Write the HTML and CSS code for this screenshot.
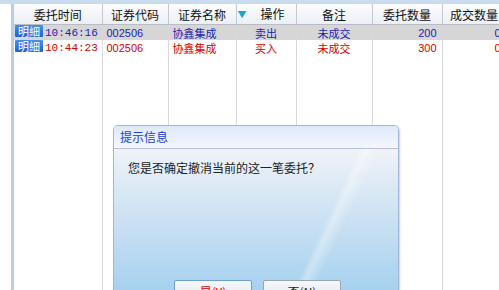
FILE: index.html
```html
<!DOCTYPE html>
<html lang="zh-CN">
<head>
    <meta charset="UTF-8">
    <title>委托撤单</title>
    <link rel="stylesheet" href="styles.css">
</head>
<body>
<div class="frame">
    <div class="side"></div>
    <div class="grid-wrap">
        <table class="grid">
            <colgroup>
                <col class="c1"><col class="c2"><col class="c3"><col class="c4">
                <col class="c5"><col class="c6"><col class="c7">
            </colgroup>
            <thead>
            <tr>
                <th>委托时间</th>
                <th>证券代码</th>
                <th>证券名称</th>
                <th class="sorted"><span class="tri">&#9660;</span>操作</th>
                <th>备注</th>
                <th>委托数量</th>
                <th>成交数量</th>
            </tr>
            </thead>
            <tbody>
            <tr class="sell sel">
                <td class="time"><span class="badge">明細</span>10:46:16</td>
                <td class="code">002506</td>
                <td>协鑫集成</td>
                <td class="mid">卖出</td>
                <td class="mid">未成交</td>
                <td class="num">200</td>
                <td class="num">0</td>
            </tr>
            <tr class="buy">
                <td class="time"><span class="badge">明細</span>10:44:23</td>
                <td class="code">002506</td>
                <td>协鑫集成</td>
                <td class="mid">买入</td>
                <td class="mid">未成交</td>
                <td class="num">300</td>
                <td class="num">0</td>
            </tr>
            <tr class="filler">
                <td></td><td></td><td></td><td></td><td></td><td></td><td></td>
            </tr>
            </tbody>
        </table>
    </div>
</div>

<div class="dialog">
    <div class="dlg-title">提示信息</div>
    <div class="dlg-body">
        <p class="dlg-msg">您是否确定撤消当前的这一笔委托？</p>
        <div class="dlg-buttons">
            <button class="btn yes">是(Y)</button>
            <button class="btn">否(N)</button>
        </div>
    </div>
</div>
</body>
</html>
```

FILE: styles.css
```css
body {
    margin: 0;
    width: 499px;
    height: 290px;
    overflow: hidden;
    background: #ffffff;
    font-family: "Noto Sans CJK SC", "DejaVu Sans", sans-serif;
    font-size: 12px;
    position: relative;
}

.frame {
    display: flex;
    height: 290px;
    border-top: 4px solid #c9dbef;
    box-sizing: border-box;
}
.side {
    width: 11px;
    background: #ffffff;
    border-right: 3px solid #b8cde8;
    flex: none;
}
.grid-wrap {
    flex: 1;
    overflow: hidden;
}

.grid {
    border-collapse: collapse;
    table-layout: fixed;
    width: 492px;
    height: 286px;
}
.c1 { width: 88px; }
.c2 { width: 66px; }
.c3 { width: 68px; }
.c4 { width: 60px; }
.c5 { width: 76px; }
.c6 { width: 70px; }
.c7 { width: 64px; }

.grid th {
    height: 19px;
    padding: 0;
    font-weight: normal;
    color: #111;
    font-size: 12px;
    background: linear-gradient(#fbfcfe, #eceff4);
    border-right: 1px solid #c4c8d0;
    border-bottom: 1px solid #b8bcc6;
    white-space: nowrap;
    line-height: 19px;
}
.grid th.sorted { text-align: center; }
.tri {
    color: #1aa6c8;
    font-size: 9px;
    margin-right: 14px;
    margin-left: -10px;
    vertical-align: 1px;
}

.grid td {
    height: 14px;
    padding: 0 4px;
    line-height: 14px;
    font-size: 11px;
    border-right: 1px solid #d8d8d8;
    white-space: nowrap;
    overflow: hidden;
}
.grid tr.filler td { height: auto; }

.sel td { background: #d6d6d6; }
.sell td { color: #1c1cb0; }
.buy td { color: #d40000; }

.time {
    font-family: "Liberation Mono", monospace;
    font-size: 11px;
    padding-left: 1px !important;
}
.badge {
    display: inline-block;
    background: linear-gradient(#4a8ee8, #1f62d0);
    color: #fff;
    font-family: "Noto Sans CJK SC", sans-serif;
    font-size: 11px;
    line-height: 12px;
    padding: 0 3px;
    margin-right: 2px;
    border-radius: 1px;
}
.code { font-family: "Liberation Sans", sans-serif; font-size: 10px; }
.mid { text-align: center; }
.num {
    text-align: right;
    font-family: "Liberation Sans", sans-serif;
    font-size: 11px;
    padding-right: 5px !important;
}

.dialog {
    position: absolute;
    left: 113px;
    top: 125px;
    width: 286px;
    height: 165px;
    border: 1px solid #9fb6d6;
    border-bottom: none;
    border-radius: 5px 5px 0 0;
    overflow: hidden;
    box-sizing: border-box;
    box-shadow: 1px 1px 2px rgba(120, 140, 170, 0.4);
}
.dlg-title {
    height: 22px;
    line-height: 22px;
    padding-left: 6px;
    color: #1b3fd0;
    font-size: 12px;
    background: linear-gradient(#dfe9fb, #f3f7fe);
    border-bottom: 1px solid #b5c3d8;
}
.dlg-body {
    height: 142px;
    background:
        linear-gradient(115deg, transparent 70%, rgba(255, 255, 255, 0.35) 72%, transparent 76%),
        linear-gradient(#eff3f8, #d2e4f3 40%, #a6d1ef);
    padding: 10px 0 0 14px;
    box-sizing: border-box;
    overflow: hidden;
}
.dlg-msg {
    margin: 0;
    color: #222;
    font-size: 12px;
}
.dlg-buttons {
    display: flex;
    gap: 11px;
    margin-top: 104px;
    margin-left: 46px;
}
.btn {
    flex: none;
    width: 78px;
    height: 22px;
    font-family: "Noto Sans CJK SC", sans-serif;
    font-size: 12px;
    color: #222;
    background: linear-gradient(#f6f8fa, #e1e6ec);
    border: 1px solid #9aa6b4;
    border-radius: 2px;
    padding: 0;
}
.btn.yes {
    color: #d40000;
    border-color: #6f9fcf;
}
```
